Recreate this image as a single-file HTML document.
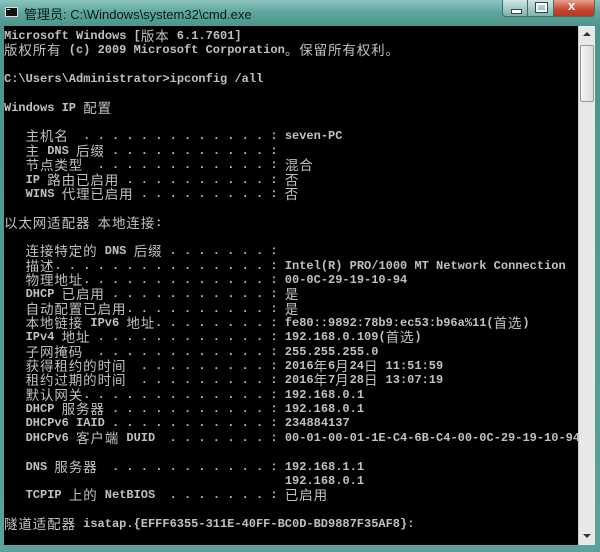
<!DOCTYPE html>
<html><head><meta charset="utf-8">
<style>
html,body{margin:0;padding:0;width:600px;height:552px;overflow:hidden;background:#4f9a92;}
#frame{position:absolute;left:0;top:0;width:600px;height:552px;background:linear-gradient(180deg,#8cc4be 0,#5ea79f 12px,#4b958d 26px,#5aa29a 100%);}
#title{position:absolute;left:24px;top:4px;font:13px "Liberation Sans","Noto Sans CJK SC",sans-serif;color:#0d1a1a;}
#ico{position:absolute;left:5px;top:7px;width:11px;height:8px;background:#111;border:1px solid #ddd;}
#ico:after{content:"";position:absolute;left:1px;top:1px;width:3px;height:1px;background:#ddd;}
.btn{position:absolute;top:0;height:16px;border:1px solid #3d6f69;border-top:none;}
#bmin{left:502px;width:24px;background:linear-gradient(#cfe6e2,#7fb3ac);border-radius:0 0 0 4px;}
#bmax{left:527px;width:25px;background:linear-gradient(#cfe6e2,#7fb3ac);}
#bcls{left:553px;width:40px;background:linear-gradient(#e8a08e,#c8452f 60%,#b33a25);border-radius:0 0 4px 0;}
#bmin:after{content:"";position:absolute;left:8px;top:9px;width:9px;height:3px;background:#fff;border:1px solid #345;}
#bmax:after{content:"";position:absolute;left:8px;top:3px;width:7px;height:5px;border:2px solid #fff;outline:1px solid #345;}
#bcls span{position:absolute;left:14px;top:-2px;color:#fff;font:bold 13px "Liberation Sans",sans-serif;}
#con{position:absolute;left:4px;top:26px;width:574px;height:519px;background:#000;overflow:hidden;}
#sb{position:absolute;left:578px;top:26px;width:16px;height:519px;background:#e8e8e8;border-left:1px solid #ccc;}
#thumb{position:absolute;left:1px;top:19px;width:12px;height:55px;background:linear-gradient(90deg,#f4f4f4,#dcdcdc);border:1px solid #999;border-radius:2px;}
.arr{position:absolute;left:4px;width:0;height:0;border-left:4px solid transparent;border-right:4px solid transparent;}
.l{position:absolute;left:0;height:15px;white-space:pre;font:12px/15px "Liberation Mono",monospace;color:#c0c0c0;font-weight:bold;}
.a{display:inline-block;height:15px;line-height:15px;vertical-align:top;white-space:pre;}
.c{display:inline-block;width:14.4px;height:15px;line-height:15px;vertical-align:top;font-weight:normal;font-family:"Noto Sans CJK SC",sans-serif;font-size:13.5px;position:relative;top:-1px;}
</style></head><body>
<div id="frame"></div>
<div id="ico"></div>
<div id="title">管理员: C:\Windows\system32\cmd.exe</div>
<div class="btn" id="bmin"></div><div class="btn" id="bmax"></div><div class="btn" id="bcls"><span>x</span></div>
<div id="con">
<div class="l">Microsoft Windows [版本 6.1.7601]</div>
<div class="l">版权所有 (c) 2009 Microsoft Corporation。保留所有权利。</div>
<div class="l"></div>
<div class="l">C:\Users\Administrator&gt;ipconfig /all</div>
<div class="l"></div>
<div class="l">Windows IP 配置</div>
<div class="l"></div>
<div class="l" data-k="   主机名  " data-v="seven-PC"></div>
<div class="l" data-k="   主 DNS 后缀 " data-v=""></div>
<div class="l" data-k="   节点类型  " data-v="混合"></div>
<div class="l" data-k="   IP 路由已启用 " data-v="否"></div>
<div class="l" data-k="   WINS 代理已启用 " data-v="否"></div>
<div class="l"></div>
<div class="l">以太网适配器 本地连接:</div>
<div class="l"></div>
<div class="l" data-k="   连接特定的 DNS 后缀 " data-v=""></div>
<div class="l" data-k="   描述" data-v="Intel(R) PRO/1000 MT Network Connection"></div>
<div class="l" data-k="   物理地址" data-v="00-0C-29-19-10-94"></div>
<div class="l" data-k="   DHCP 已启用 " data-v="是"></div>
<div class="l" data-k="   自动配置已启用" data-v="是"></div>
<div class="l" data-k="   本地链接 IPv6 地址" data-v="fe80::9892:78b9:ec53:b96a%11(首选)"></div>
<div class="l" data-k="   IPv4 地址 " data-v="192.168.0.109(首选)"></div>
<div class="l" data-k="   子网掩码  " data-v="255.255.255.0"></div>
<div class="l" data-k="   获得租约的时间  " data-v="2016年6月24日 11:51:59"></div>
<div class="l" data-k="   租约过期的时间  " data-v="2016年7月28日 13:07:19"></div>
<div class="l" data-k="   默认网关" data-v="192.168.0.1"></div>
<div class="l" data-k="   DHCP 服务器 " data-v="192.168.0.1"></div>
<div class="l" data-k="   DHCPv6 IAID " data-v="234884137"></div>
<div class="l" data-k="   DHCPv6 客户端 DUID  " data-v="00-01-00-01-1E-C4-6B-C4-00-0C-29-19-10-94"></div>
<div class="l"></div>
<div class="l" data-k="   DNS 服务器  " data-v="192.168.1.1"></div>
<div class="l">                                       192.168.0.1</div>
<div class="l" data-k="   TCPIP 上的 NetBIOS  " data-v="已启用"></div>
<div class="l"></div>
<div class="l">隧道适配器 isatap.{EFFF6355-311E-40FF-BC0D-BD9887F35AF8}:</div>
</div>
<div id="sb">
<div class="arr" style="top:6px;border-bottom:4px solid #333;"></div>
<div id="thumb"></div>
<div class="arr" style="top:508px;border-top:4px solid #333;"></div>
</div>
<script>
var cjk=/[\u3000-\u9fff\uff00-\uffef]/;
function w(s){var n=0;for(var ch of s)n+=cjk.test(ch)?2:1;return n;}
function esc(c){return c.replace(/&/g,'&amp;').replace(/</g,'&lt;').replace(/>/g,'&gt;');}
function wrap(s){var o='',run='';for(var ch of s){if(cjk.test(ch)){if(run){o+='<span class="a">'+esc(run)+'</span>';run='';}o+='<span class="c">'+ch+'</span>';}else run+=ch;}if(run)o+='<span class="a">'+esc(run)+'</span>';return o;}
var ls=document.querySelectorAll('.l');
ls.forEach(function(d,i){
 d.style.top=(3+i*14.35)+'px';
 var k=d.getAttribute('data-k');
 var s;
 if(k!==null){
  var v=d.getAttribute('data-v');s=k;var p=w(s);
  while(p<36){s+=(p%2==1)?'.':' ';p++;}
  s+=' : '+v;
 } else s=d.textContent;
 d.innerHTML=wrap(s);
});
</script>
</body></html>
